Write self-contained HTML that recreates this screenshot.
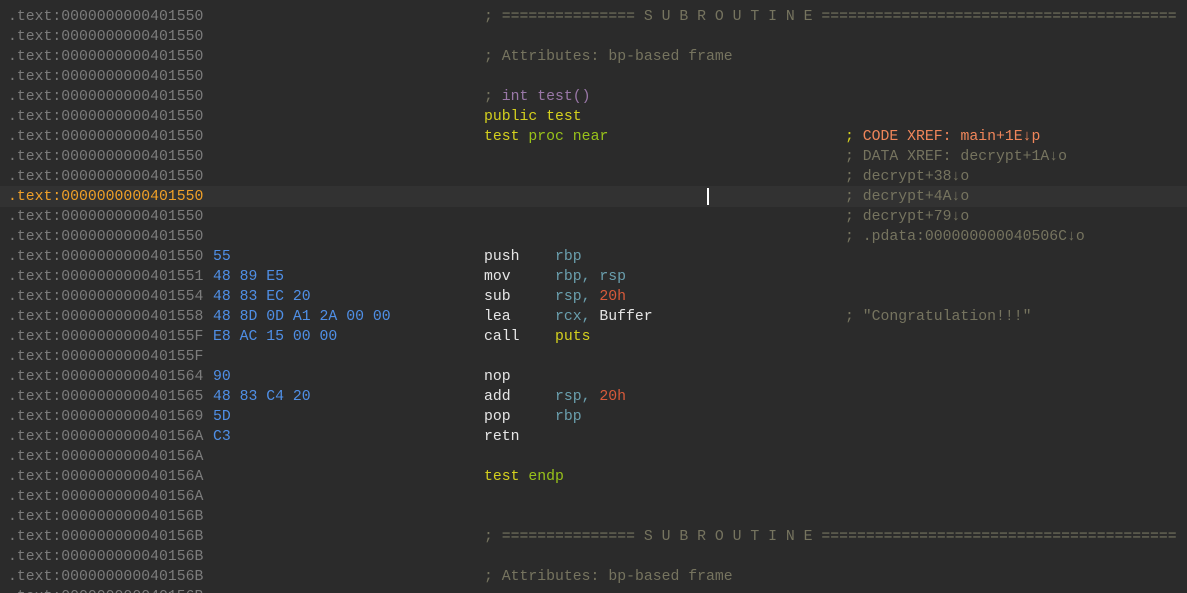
<!DOCTYPE html>
<html><head><meta charset="utf-8"><style>
html,body{margin:0;padding:0;background:#2b2b2b;width:1187px;height:593px;overflow:hidden}
body{font-family:"Liberation Mono",monospace;font-size:14.8px;position:relative}
.r{position:absolute;left:0;width:1187px;height:20px;line-height:20px;white-space:pre;margin-top:1px}
.r span{position:absolute;top:0}
.a{left:8px;color:#7c7c7c}
.b{left:213px;color:#4f8fe6}
.c{left:484px}
.o{left:555px}
.m{left:845px;color:#76745f}
.hl{background:#323232}
.hl .a{color:#f0a028}
.w{color:#e6e6e6}.t{color:#6a9fae}.n{color:#d85a3a}.y{color:#d4d01e}.g{color:#98c21a}.p{color:#9a78a8}.gc{color:#76745f}.x{color:#f0865a}
</style></head><body>
<div class="r" style="top:-14px"><span class="a">.text:0000000000401550</span></div>
<div class="r" style="top:6px"><span class="a">.text:0000000000401550</span><span class="c gc">; =============== S U B R O U T I N E ========================================</span></div>
<div class="r" style="top:26px"><span class="a">.text:0000000000401550</span></div>
<div class="r" style="top:46px"><span class="a">.text:0000000000401550</span><span class="c gc">; Attributes: bp-based frame</span></div>
<div class="r" style="top:66px"><span class="a">.text:0000000000401550</span></div>
<div class="r" style="top:86px"><span class="a">.text:0000000000401550</span><span class="c"><span class="gc" style="position:static">; </span><span class="p" style="position:static">int test()</span></span></div>
<div class="r" style="top:106px"><span class="a">.text:0000000000401550</span><span class="c"><span class="y" style="position:static">public test</span></span></div>
<div class="r" style="top:126px"><span class="a">.text:0000000000401550</span><span class="c"><span class="y" style="position:static">test </span><span class="g" style="position:static">proc near</span></span><span class="m"><span class="y" style="position:static">; </span><span class="x" style="position:static">CODE XREF: main+1E↓p</span></span></div>
<div class="r" style="top:146px"><span class="a">.text:0000000000401550</span><span class="m">; DATA XREF: decrypt+1A↓o</span></div>
<div class="r" style="top:166px"><span class="a">.text:0000000000401550</span><span class="m">; decrypt+38↓o</span></div>
<div class="r hl" style="top:185px;height:21px"><span class="a" style="top:1px">.text:0000000000401550</span><span style="left:707px;top:2px;width:2px;height:17px;background:#fff"></span><span class="m" style="top:1px">; decrypt+4A↓o</span></div>
<div class="r" style="top:206px"><span class="a">.text:0000000000401550</span><span class="m">; decrypt+79↓o</span></div>
<div class="r" style="top:226px"><span class="a">.text:0000000000401550</span><span class="m">; .pdata:000000000040506C↓o</span></div>
<div class="r" style="top:246px"><span class="a">.text:0000000000401550</span><span class="b">55</span><span class="c w">push</span><span class="o t">rbp</span></div>
<div class="r" style="top:266px"><span class="a">.text:0000000000401551</span><span class="b">48 89 E5</span><span class="c w">mov</span><span class="o t">rbp, rsp</span></div>
<div class="r" style="top:286px"><span class="a">.text:0000000000401554</span><span class="b">48 83 EC 20</span><span class="c w">sub</span><span class="o"><span class="t" style="position:static">rsp, </span><span class="n" style="position:static">20h</span></span></div>
<div class="r" style="top:306px"><span class="a">.text:0000000000401558</span><span class="b">48 8D 0D A1 2A 00 00</span><span class="c w">lea</span><span class="o"><span class="t" style="position:static">rcx, </span><span class="w" style="position:static">Buffer</span></span><span class="m">; "Congratulation!!!"</span></div>
<div class="r" style="top:326px"><span class="a">.text:000000000040155F</span><span class="b">E8 AC 15 00 00</span><span class="c w">call</span><span class="o y">puts</span></div>
<div class="r" style="top:346px"><span class="a">.text:000000000040155F</span></div>
<div class="r" style="top:366px"><span class="a">.text:0000000000401564</span><span class="b">90</span><span class="c w">nop</span></div>
<div class="r" style="top:386px"><span class="a">.text:0000000000401565</span><span class="b">48 83 C4 20</span><span class="c w">add</span><span class="o"><span class="t" style="position:static">rsp, </span><span class="n" style="position:static">20h</span></span></div>
<div class="r" style="top:406px"><span class="a">.text:0000000000401569</span><span class="b">5D</span><span class="c w">pop</span><span class="o t">rbp</span></div>
<div class="r" style="top:426px"><span class="a">.text:000000000040156A</span><span class="b">C3</span><span class="c w">retn</span></div>
<div class="r" style="top:446px"><span class="a">.text:000000000040156A</span></div>
<div class="r" style="top:466px"><span class="a">.text:000000000040156A</span><span class="c"><span class="y" style="position:static">test </span><span class="g" style="position:static">endp</span></span></div>
<div class="r" style="top:486px"><span class="a">.text:000000000040156A</span></div>
<div class="r" style="top:506px"><span class="a">.text:000000000040156B</span></div>
<div class="r" style="top:526px"><span class="a">.text:000000000040156B</span><span class="c gc">; =============== S U B R O U T I N E ========================================</span></div>
<div class="r" style="top:546px"><span class="a">.text:000000000040156B</span></div>
<div class="r" style="top:566px"><span class="a">.text:000000000040156B</span><span class="c gc">; Attributes: bp-based frame</span></div>
<div class="r" style="top:586px"><span class="a">.text:000000000040156B</span></div>
</body></html>
